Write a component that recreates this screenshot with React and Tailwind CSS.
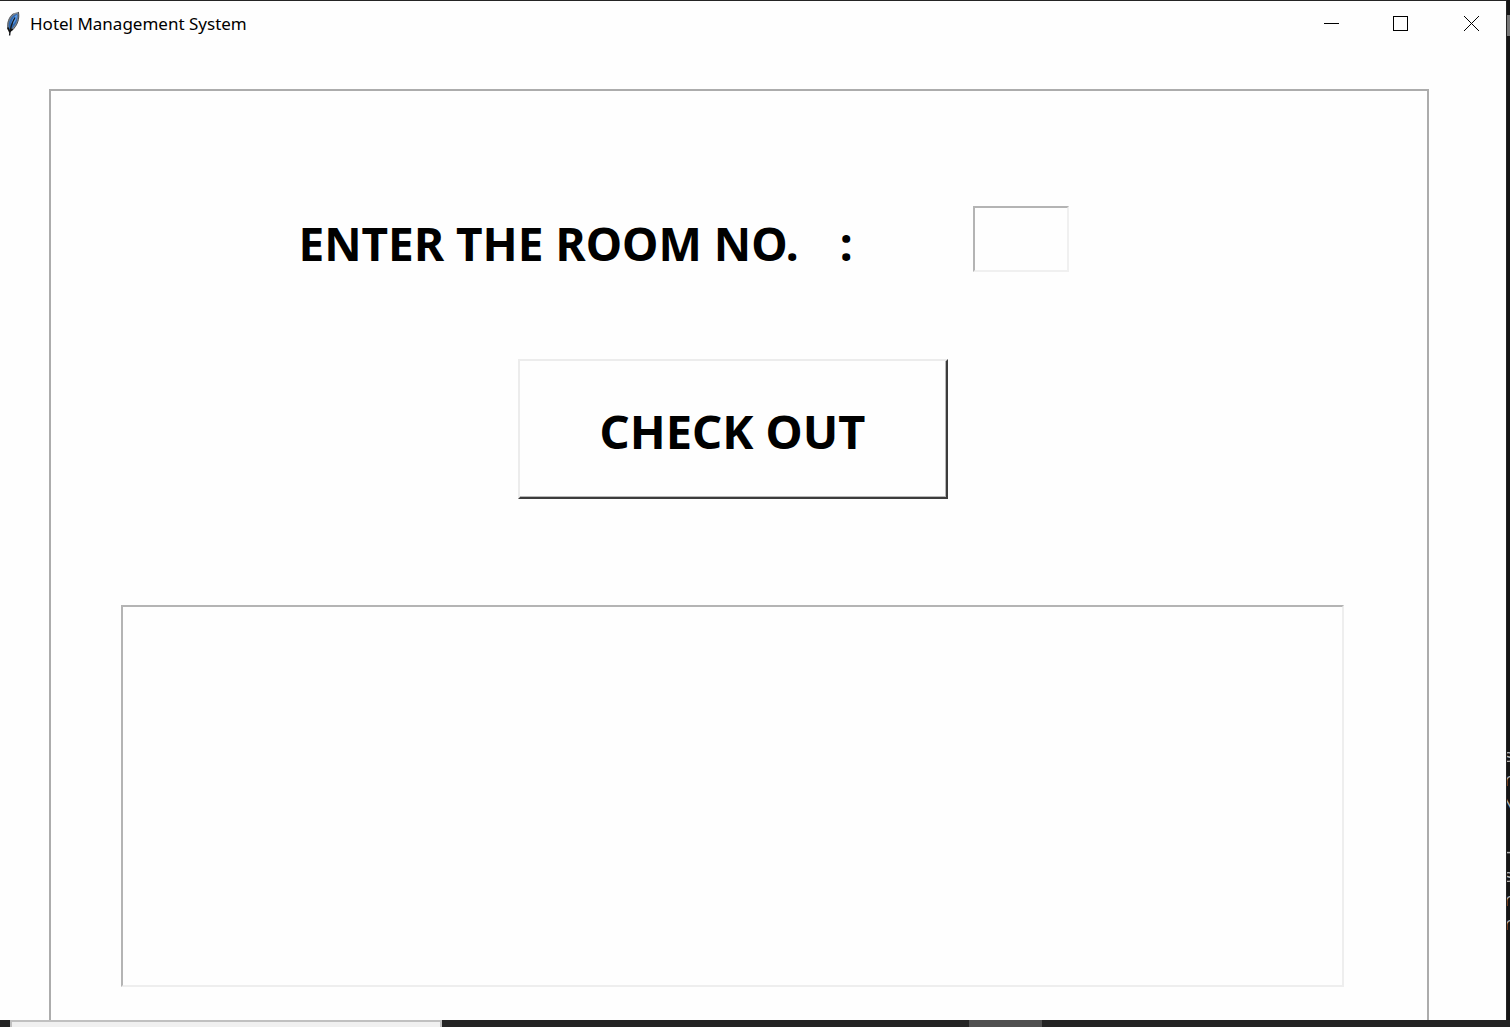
import React from "react";

function Feather() {
  return (
    <svg viewBox="0 0 16 26" className="h-[26px] w-4 shrink-0" aria-hidden="true">
      <path d="M3.2 19.5C.8 13 3 6.5 8 2.6L13.6 .8C15 7.5 12.4 14.5 7.2 19.5Z" fill="#85898e" />
      <path d="M4 18C2.5 12.5 4.6 7.3 9 4L12.4 2.4C13.4 8 11 14 6.4 18Z" fill="#2f67ad" />
      <path d="M6.5 11.5C6.8 8 9.4 5 12 3.4C12.2 7 10.8 10.5 8.2 13Z" fill="#5b9be8" />
      <path d="M13.4 1C14.8 7.5 12.4 14.5 7.2 19.2" fill="none" stroke="#4a5058" />
      <path d="M8.4 2.8C4.2 6 1.9 12 3 18.5" fill="none" stroke="#5a5f66" />
      <path d="M10 6.5C7 11.5 5.2 16 4.6 24.5" fill="none" stroke="#15181c" strokeWidth="1.4" />
      <path d="M2.8 16.5L4.6 20.5L7.6 18" fill="none" stroke="#111" strokeWidth="1.8" />
    </svg>
  );
}

const captionButton = "flex h-[45px] w-[70px] items-center justify-center";

function TitleBar() {
  return (
    <header className="flex h-[45px] shrink-0 items-center pl-[5px] text-black">
      <Feather />
      <h1 className="ml-[9px] grow pt-px text-[17px] leading-6">Hotel Management System</h1>
      <button type="button" aria-label="Minimize" className={captionButton}>
        <svg width="15" height="15" fill="none" stroke="currentColor" shapeRendering="crispEdges">
          <path d="M0 7.5H15" />
        </svg>
      </button>
      <button type="button" aria-label="Maximize" className={captionButton}>
        <svg width="16" height="15" fill="none" stroke="currentColor" shapeRendering="crispEdges">
          <path d="M.5 .5H14.5V14.5H.5Z" />
        </svg>
      </button>
      <button type="button" aria-label="Close" className={captionButton}>
        <svg width="15" height="15" fill="none" stroke="currentColor">
          <path d="M0 0L15 15M15 0L0 15" />
        </svg>
      </button>
    </header>
  );
}

function CheckOutForm() {
  return (
    <form
      onSubmit={(e) => e.preventDefault()}
      className="mt-[43px] mr-[77px] ml-[49px] flex grow flex-col border-2 border-b-0 border-[#acacac] pt-[115px] pr-[83px] pb-[33px] pl-[70px] text-black"
    >
      <div className="flex h-[66px] items-center justify-center pr-[98px]">
        <label htmlFor="room" className="flex gap-[41px] pt-[7px] text-[46px] leading-[64px] font-bold whitespace-nowrap">
          <span>ENTER THE ROOM NO.</span>
          <span>:</span>
        </label>
        <input
          id="room"
          type="text"
          className="ml-[120px] h-[66px] w-24 shrink-0 border-2 border-t-[#b4b4b4] border-r-[#f0f0f0] border-b-[#f0f0f0] border-l-[#b4b4b4] px-2 text-[32px] outline-none"
        />
      </div>
      <button
        type="submit"
        className="mt-[87px] h-[140px] w-[430px] shrink-0 self-center border-2 border-t-[#ececec] border-r-[#3c3c3c] border-b-[#3c3c3c] border-l-[#ececec] pt-[4px] text-[47px] leading-[64px] font-bold shadow-[inset_-1px_-1px_0_#b8b8b8]"
      >
        CHECK OUT
      </button>
      <textarea
        aria-label="Check out details"
        className="mt-[106px] w-full grow resize-none border-2 border-t-[#b4b4b4] border-r-[#eeeeee] border-b-[#eeeeee] border-l-[#b4b4b4] p-3 text-[24px] outline-none"
      />
    </form>
  );
}

const editorLines = ["s", "r", "\\", "", "-", "s", "r", "r"];

export default function App() {
  return (
    <div className="flex h-screen flex-col overflow-hidden bg-[#242424] font-['Noto_Sans','Open_Sans',sans-serif]">
      <div className="flex min-h-0 grow">
        <main className="flex grow flex-col border-t border-[#242424] bg-[#fefefe]">
          <TitleBar />
          <CheckOutForm />
        </main>
        <aside className="flex w-1 shrink-0 flex-col overflow-hidden border-l border-[#242424] bg-[#151515]">
          <div className="mt-[15px] h-[21px] shrink-0 bg-[#777777]" />
          <div className="mt-[709px] font-['Liberation_Mono',monospace] text-[18px] leading-6 text-[#b5b5b5]">
            {editorLines.map((line, i) => (
              <div key={i} className="-ml-1 h-6">{line}</div>
            ))}
          </div>
        </aside>
      </div>
      <footer className="flex h-[7px] shrink-0 pl-[10px]">
        <div className="w-[432px] border-2 border-b-0 border-[#c0c0c0] bg-[#f0f0f0]" />
        <div className="ml-[527px] w-[73px] bg-[#505050]" />
      </footer>
    </div>
  );
}
